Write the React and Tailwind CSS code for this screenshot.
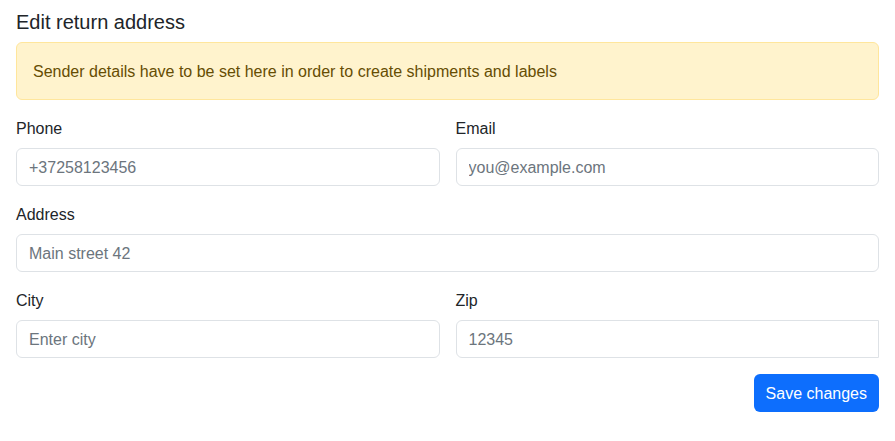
const FONT = "font-['Liberation_Sans',Arial,sans-serif]";

function Field({ label, placeholder, className = '', inputClass = 'rounded-md' }) {
  return (
    <div className={className}>
      <label className="block pt-px mb-[7px] text-base leading-6 text-[#212529]">{label}</label>
      <input
        type="text"
        placeholder={placeholder}
        className={`block w-full h-[38px] px-3 pt-[2px] text-base border border-[#dee2e6] bg-white text-[#212529] placeholder:text-[#6c757d] outline-none ${inputClass}`}
      />
    </div>
  );
}

export default function App() {
  return (
    <div className={`min-h-[441px] w-[895px] bg-white px-4 pt-[10px] ${FONT}`}>
      <h5 className="text-xl leading-6 font-medium text-[#212529] mb-2">Edit return address</h5>

      <div className="mb-4 rounded-md border border-[#ffe69c] bg-[#fff3cd] px-4 pt-[17px] pb-[15px] text-base leading-6 text-[#664d03]">
        Sender details have to be set here in order to create shipments and labels
      </div>

      {/* Contact */}
      <div className="grid grid-cols-2 gap-x-4 mb-4">
        <Field label="Phone" placeholder="+37258123456" />
        <Field label="Email" placeholder="you@example.com" />
      </div>

      <Field label="Address" placeholder="Main street 42" className="mb-4" />

      <div className="grid grid-cols-2 gap-x-4 mb-4">
        <Field label="City" placeholder="Enter city" />
        <Field label="Zip" placeholder="12345" inputClass="rounded-l-md rounded-r-none" />
      </div>

      <div className="flex justify-end">
        <button className="h-[38px] rounded-md bg-[#0d6efd] px-3 pt-[2px] text-base text-white">
          Save changes
        </button>
      </div>
    </div>
  );
}
